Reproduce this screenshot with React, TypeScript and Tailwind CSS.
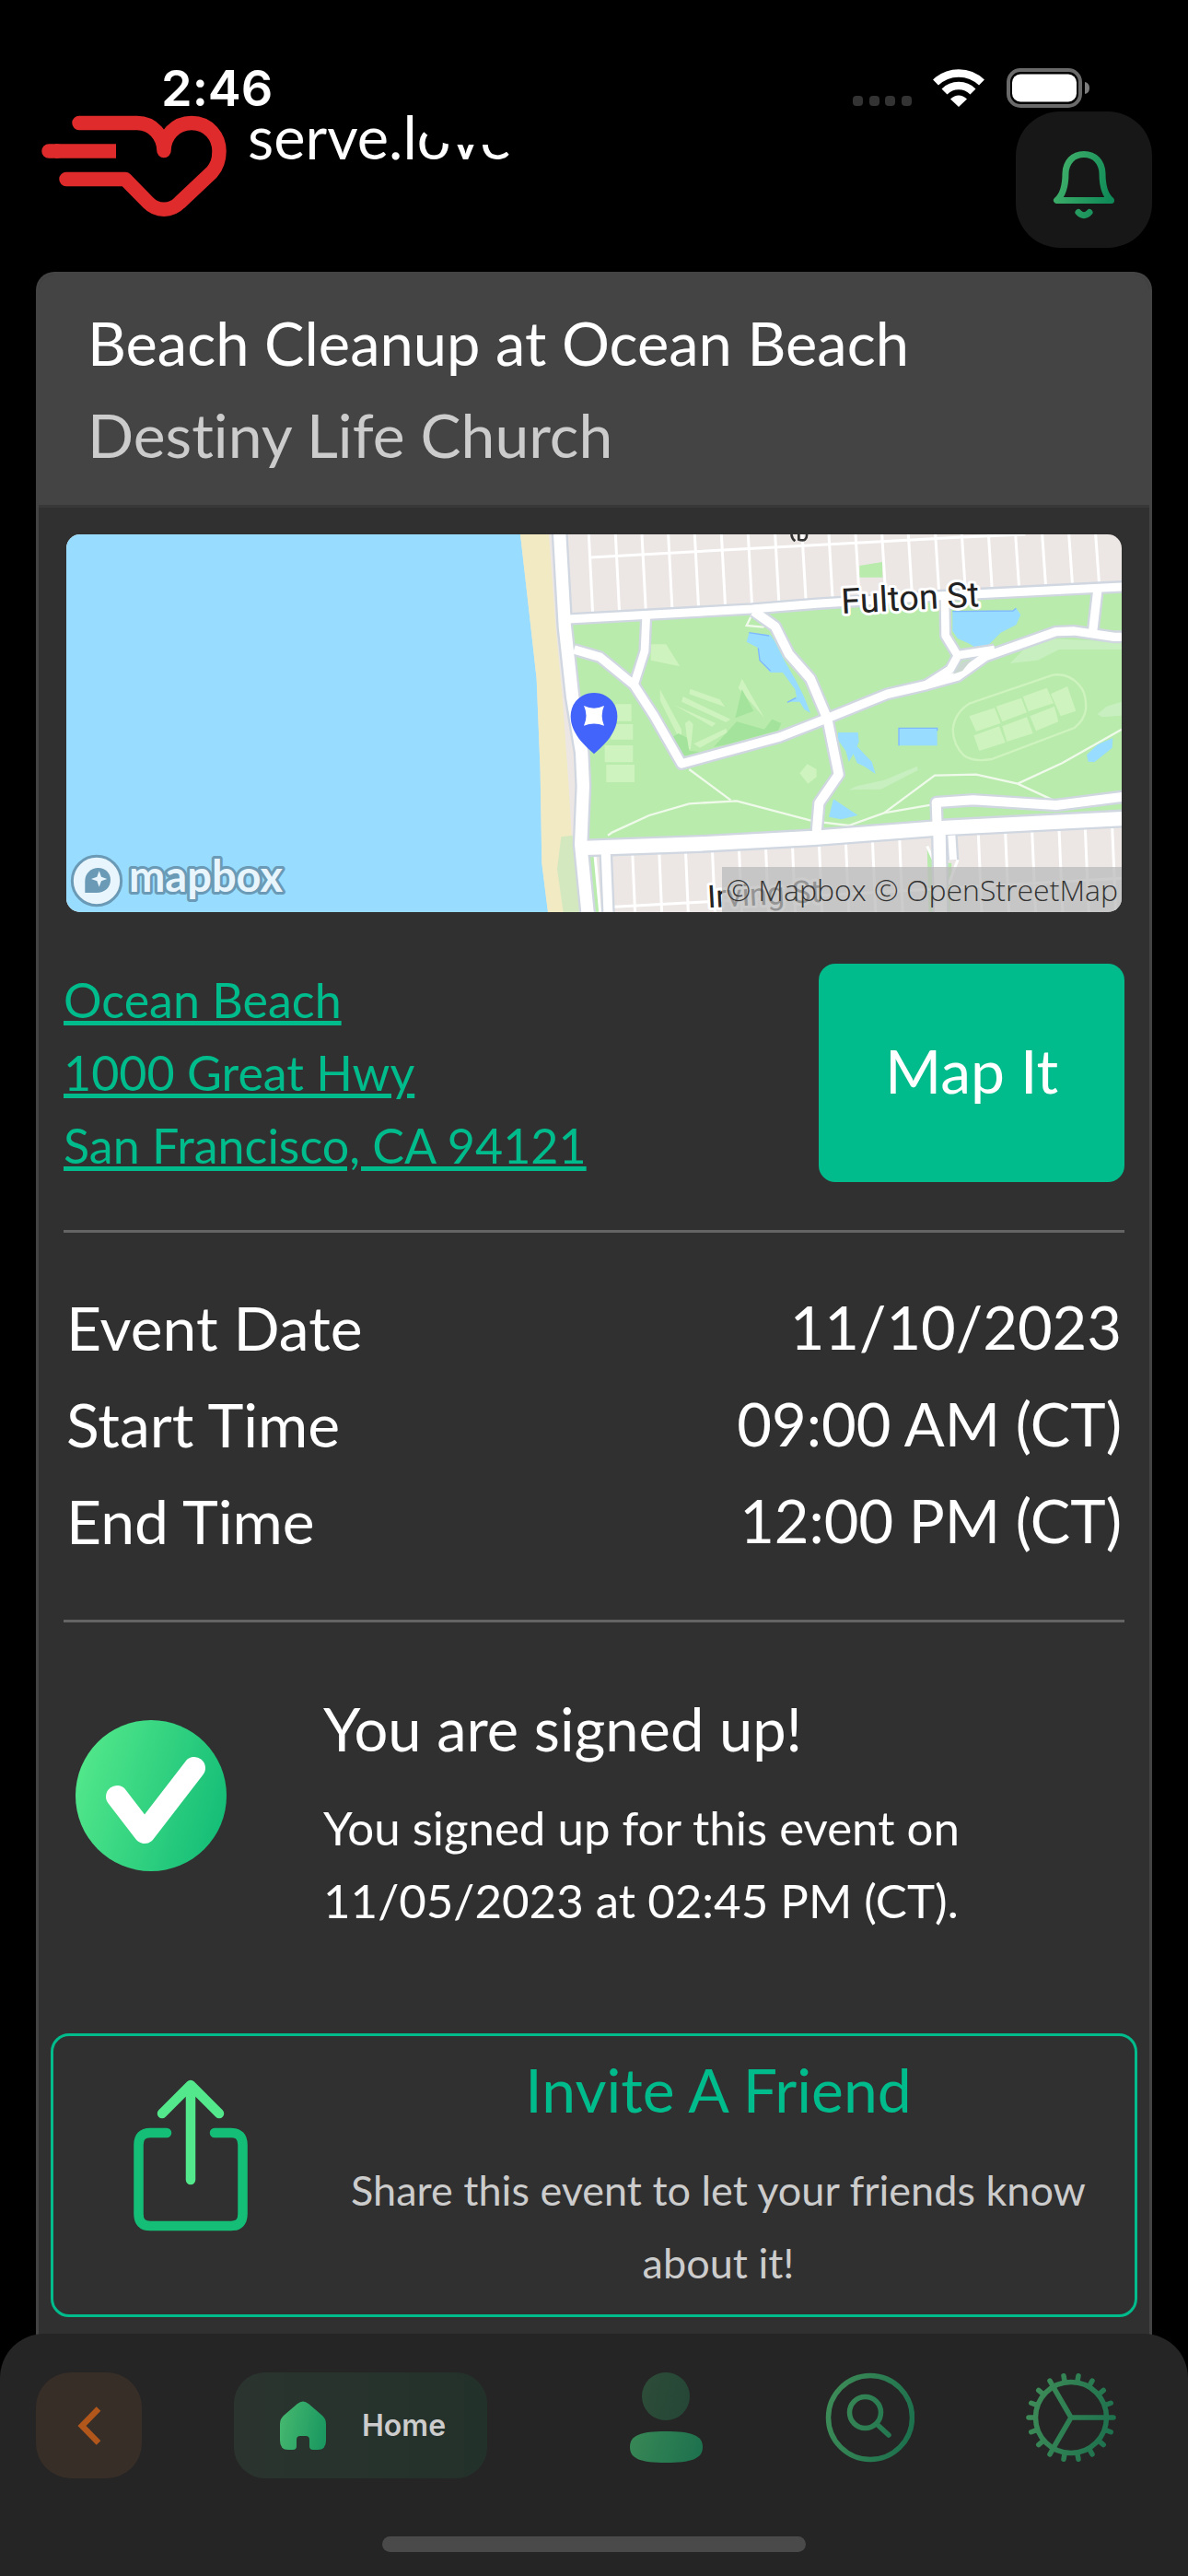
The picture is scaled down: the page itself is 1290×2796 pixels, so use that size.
import type { ReactNode } from 'react'

const address = ['Ocean Beach', '1000 Great Hwy', 'San Francisco, CA 94121']

const schedule = [
  { label: 'Event Date', value: '11/10/2023' },
  { label: 'Start Time', value: '09:00 AM (CT)' },
  { label: 'End Time', value: '12:00 PM (CT)' },
]

function StatusBar() {
  return (
    <div className="flex h-[121px] items-start justify-between pr-[107px] pl-[175px] pt-[63px]">
      <span className="font-['Inter',sans-serif] text-[54px] leading-[66px] font-semibold">2:46</span>
      <div className="flex items-center pt-[10px]">
        <svg width="64" height="44" viewBox="0 0 64 44" fill="#333" aria-hidden="true">
          {[0, 18, 35, 53].map((x) => (
            <rect key={x} x={x} y="31" width="11" height="11" rx="4" />
          ))}
        </svg>
        <svg className="ml-[23px]" width="56" height="44" viewBox="0 0 56 44" fill="none" stroke="#fff" aria-hidden="true">
          <path d="M3 16.500A36 36 0 0 1 53 16.500" strokeWidth="8.500" />
          <path d="M12.500 26.500A22 22 0 0 1 43.500 26.500" strokeWidth="8.500" />
          <path d="M19 34.500Q28 26.500 37 34.500L28 43Z" fill="#fff" stroke="none" />
        </svg>
        <svg className="ml-[24px]" width="90" height="44" viewBox="0 0 90 44" aria-hidden="true">
          <rect x="2" y="3" width="78" height="39" rx="13" fill="none" stroke="#6a6a6a" strokeWidth="4" />
          <rect x="6" y="7.500" width="70" height="30" rx="9" fill="#fff" />
          <path d="M85 16Q90 17 90 22.500Q90 28 85 29Z" fill="#7d7d7d" />
        </svg>
      </div>
    </div>
  )
}

function Logo() {
  return (
    <a href="#home" className="flex items-start">
      <svg width="212" height="120" viewBox="37 121 212 120" fill="none" stroke="#df2b2b" strokeWidth="15.500" aria-hidden="true">
        <path d="M86 133.500H149C166 133.500 178 148 178 163.500C178 148 190 133.500 208 133.500C227 133.500 238 149 238 164C238 174 236 180 230 187L195 220C186 229.500 170 229.500 161 220L136 194.500H72" strokeLinejoin="round" strokeLinecap="round" />
        <path d="M53 164H62" strokeLinecap="round" />
        <path d="M60 164H126" />
      </svg>
      <span className="ml-5 text-[65px] leading-[54px]">serve.love</span>
    </a>
  )
}

function BellIcon() {
  return (
    <svg width="74" height="80" viewBox="0 0 74 80" fill="none" stroke="url(#bell)" strokeWidth="7" strokeLinecap="round" strokeLinejoin="round" aria-hidden="true">
      <defs>
        <linearGradient id="bell" gradientUnits="userSpaceOnUse" x1="4" y1="20" x2="70" y2="40">
          <stop stopColor="#44b26b" />
          <stop offset="1" stopColor="#0f8a58" />
        </linearGradient>
      </defs>
      <path d="M37 6.500C25 6.500 17.500 15 17 27C17 39 15 50 7.500 56.500H66.500C59 50 57 39 57 27C56.500 15 49 6.500 37 6.500Z" />
      <path d="M31 69.500Q37 76 43 69.500" />
    </svg>
  )
}

const topStreets = [298, 385, 471, 557, 643, 730, 817, 905, 993, 1080, 1167, 1253, 1339, 1427, 1513, 1600, 1688, 1775, 1862, 1949]
const bottomStreets = [440, 527, 613, 700, 787, 874, 961, 1048, 1135, 1222, 1310, 1567, 1655, 1742, 1830, 1915, 2003]

const roads = [
  { d: 'M230 306L830 273L1040 256L1445 230L2050 200', width: 27 },
  { d: 'M485 300L480 410L445 520', width: 26 },
  { d: 'M250 405L335 430L445 520L510 620L600 777L920 690L1060 635L1270 550L1400 520L1500 492L1590 428L1820 347L1880 345L2010 364H2050', width: 28 },
  { d: 'M835 280L905 330L950 420L1020 500L1075 630L1112 812L1048 905L1040 1000', width: 30 },
  { d: 'M1458 240L1460 360L1500 425L1475 470L1400 518M1490 425L1620 405', width: 26 },
  { d: 'M1955 215L1940 345', width: 28 },
  { d: 'M1433 985L1430 903L1550 895L1820 912L2050 883', width: 30 },
  { d: 'M1440 1000L1445 1280', width: 40 },
  { d: 'M1480 1010L1485 1090', width: 24 },
  { d: 'M353 1060L362 1280', width: 30 },
  { d: 'M265 1052L660 1038L1030 1018L1460 985L2050 955', width: 46 },
  { d: 'M202 10L220 330L245 560L275 740L280 850L272 1040L296 1280', width: 40 },
]

function ParkMap() {
  return (
    <svg className="block h-auto w-full" viewBox="-1404 30 3438 1230" role="img" aria-label="Map of Ocean Beach">
      <rect x="-1404" y="30" width="3438" height="1230" fill="#ece7e5" />
      <path d="M-1404 30H75L100 250L128 500L140 800L145 1100L165 1260H-1404Z" fill="#98ddff" />
      <path d="M75 30H168L190 330L212 560L232 840L245 1060L272 1260H165L145 1100L140 800L128 500L100 250Z" fill="#f1eac3" />
      <path d="M208 1015L245 1010L275 1260H215L195 1120Z" fill="#d4e8bf" />
      <path d="M240 306L1040 262L2034 205V940L1030 1010L290 1040Z" fill="#b8ebac" />
      <path d="M300 1075H318L335 1260H318ZM1400 1040L1425 1090V1260H1405ZM1462 1100H1480L1475 1260H1462Z" fill="#b8ebac" />
      <path d="M1180 132L1255 120V170H1180Z" fill="#b8ebac" />

      {/* meadows and playing fields */}
      <g fill="#cff3be">
        <path d="M385 583H437V638H385ZM370 648H442V698H370ZM350 717H442V772H350ZM355 780H447V837H355Z" />
        <path d="M500 388H550L595 460L500 440Z" />
        <path d="M530 535L600 665V690L585 680L530 570ZM628 533L725 568L742 592L625 550ZM605 558L760 632L745 642L600 575ZM575 585L712 645L700 656ZM612 645L625 635L638 648L630 730H622ZM640 712L745 662L750 675L660 725ZM797 500L870 628L785 530Z" />
        <path d="M985 808L1010 778L1040 795V820L1012 842Z" />
        <path d="M1537 622L1620 595L1640 645L1560 672ZM1625 590L1707 563L1725 610L1645 640ZM1712 558L1790 530L1812 580L1730 607ZM1803 550L1857 525L1885 605L1835 622ZM1552 685L1635 655L1655 708L1570 735ZM1645 655L1725 625L1745 678L1660 705ZM1735 622L1815 590L1828 640L1755 670Z" />
      </g>
      <path d="M1540 580L1810 488Q1860 480 1895 520Q1920 545 1917 600Q1912 635 1880 660L1610 762Q1550 772 1520 750Q1485 715 1484 665Q1490 610 1540 580Z" fill="none" stroke="#cff3be" strokeWidth="7" />
      <path d="M1670 450L1720 400L1810 370L2034 380V405L1830 405L1760 440ZM1955 615L1985 590L2034 575V620L1970 625ZM1145 862L1170 850L1260 830L1368 785L1370 798L1250 860Z" fill="#c8efbf" />
      <path d="M797 535L835 605L775 628ZM705 722L780 640L870 665L895 632L925 645L915 668L745 715ZM570 690L590 678L618 692L625 735L660 738L600 755Z" fill="#a3e39c" />

      {/* lakes */}
      <g fill="#98ddff">
        <path d="M820 350L890 358L905 380L935 440L975 510L1000 560L1020 612L1000 600L985 575L945 575L975 560L970 535L930 480L890 480L855 440L850 400L812 380Z" />
        <path d="M1483 280L1680 278L1690 270L1705 292L1690 325L1640 350L1600 390L1560 400L1535 385L1500 370L1483 345Z" />
        <path d="M1308 660H1433V718H1308Z" />
        <path d="M1110 675L1175 675L1178 705L1172 720L1200 750L1220 770L1232 810L1195 785L1172 775L1160 745L1145 770L1135 735L1110 700Z" />
        <path d="M1095 892L1175 945L1120 958L1080 950Z" />
        <path d="M1920 748L1955 715L2005 693L2003 725L1945 772L1925 770Z" />
      </g>
      <path d="M1483 281L1680 279L1690 271M1308 718V661H1433V670M820 350L885 360M850 400L855 440L890 475M945 577L973 562" fill="none" stroke="#7fb8ff" strokeWidth="4" />

      {/* side streets and footpaths */}
      <g fill="none" stroke="#fff" strokeWidth="9">
        {topStreets.map((x) => (
          <path key={x} d={`M${x} 30l13 ${262 - (x - 298) / 20}`} />
        ))}
        {bottomStreets.map((x) => (
          <path key={x} d={`M${x} ${1060 - (x - 440) / 20}l12 280`} />
        ))}
        <path d="M305 105L1030 65L1500 40L1720 30M340 1245L690 1226L2034 1150M318 1075L335 1260M1400 1045L1425 1100M1500 1090L1470 1170" />
      </g>
      <g fill="none" stroke="#f0faeb" strokeWidth="7">
        <path d="M360 1010L375 1000L495 945L625 907L780 898L1030 964L1145 978L1260 937L1430 908" />
        <path d="M625 795L760 895M1260 937L1425 815L1560 812L1695 842L1825 902M1695 842L1840 775L2034 665" />
        <path d="M830 290L812 327L865 332L890 318" />
      </g>

      <g fill="none" stroke="#d0d7e0" strokeLinejoin="round">
        {roads.map((r) => (
          <path key={r.d} d={r.d} strokeWidth={r.width + 14} />
        ))}
      </g>
      <g fill="none" stroke="#fff" strokeLinejoin="round">
        {roads.map((r) => (
          <path key={r.d} d={r.d} strokeWidth={r.width} />
        ))}
      </g>
      <path d="M1485 485L1515 445L1545 438L1515 475Z" fill="#cbd8d2" />

      <g fill="none" stroke="#333" strokeWidth="8">
        <path d="M958 30Q960 44 970 52M982 30V50M982 47Q1010 55 1008 30" />
      </g>
      <g fill="#222" stroke="#fff" strokeWidth="18" strokeLinejoin="round" style={{ paintOrder: 'stroke' }}>
        <text x="1122" y="288" transform="rotate(-3 1122 288)" fontFamily="Roboto, sans-serif" fontSize="114">Fulton St</text>
        <text x="686" y="1246" transform="rotate(-3 686 1246)" fontFamily="Roboto, sans-serif" fontSize="102">Irving St</text>
      </g>

      {/* event pin */}
      <path d="M315 546C273 546 239 578 239 622C239 675 280 715 315 745C350 715 391 675 391 622C391 578 357 546 315 546Z" fill="#4264fb" />
      <path d="M282 588Q315 604 348 588Q334 620 348 653Q315 640 282 653Q297 620 282 588Z" fill="#fff" />

      {/* mapbox wordmark */}
      <circle cx="-1305" cy="1158" r="80" fill="#e9f5fc" stroke="#6a9ab5" strokeWidth="9" />
      <path d="M-1343 1197V1157C-1343 1134 -1323 1116 -1300 1116C-1277 1116 -1260 1133 -1260 1155C-1260 1181 -1280 1197 -1305 1197Z" fill="#6a9ab5" />
      <path d="M-1297 1126L-1290 1145L-1271 1152L-1290 1159L-1297 1178L-1304 1159L-1323 1152L-1304 1145Z" fill="#e9f5fc" />
      <text x="-1200" y="1193" fontFamily="Lato, sans-serif" fontWeight="700" fontSize="141" fill="#e9f5fc" stroke="#6a9ab5" strokeWidth="18" strokeLinejoin="round" style={{ paintOrder: 'stroke' }}>mapbox</text>
    </svg>
  )
}

function CheckIcon() {
  return (
    <svg width="164" height="164" viewBox="0 0 164 164" aria-hidden="true">
      <defs>
        <linearGradient id="check" x1="0" y1="0.3" x2="1" y2="0.6">
          <stop stopColor="#53e88b" />
          <stop offset="1" stopColor="#15be77" />
        </linearGradient>
      </defs>
      <circle cx="82" cy="82" r="82" fill="url(#check)" />
      <path d="M45 83L75 122L129 52" fill="none" stroke="#fff" strokeWidth="24" strokeLinecap="round" strokeLinejoin="round" />
    </svg>
  )
}

function ShareIcon() {
  return (
    <svg width="124" height="168" viewBox="0 0 124 168" fill="none" strokeWidth="10.500" strokeLinecap="round" strokeLinejoin="round" aria-hidden="true">
      <path d="M36 59H18Q5.500 59 5.500 72V147Q5.500 160 18 160H106Q118.500 160 118.500 147V72Q118.500 59 106 59H88" stroke="#15be77" />
      <path d="M62 9V110M31 38L62 7L93 38" stroke="#53e88b" />
    </svg>
  )
}

function NavButton({ label, children }: { label: string; children: ReactNode }) {
  return (
    <button type="button" aria-label={label} className="flex h-[98px] w-[100px] items-center justify-center">
      {children}
    </button>
  )
}

const gearTeeth = Array.from({ length: 18 }, (_, i) => i * 20)

function BottomNav() {
  return (
    <nav className="relative -mt-12 h-[263px] rounded-t-[48px] bg-[#252525] pt-[42px] pr-[77px] pl-[39px] font-['Inter',sans-serif]">
      <svg className="absolute size-0" aria-hidden="true">
        <defs>
          <linearGradient id="nav" gradientUnits="userSpaceOnUse" x1="0" y1="30" x2="100" y2="60">
            <stop stopColor="#3f8d58" />
            <stop offset="1" stopColor="#1c704d" />
          </linearGradient>
          <linearGradient id="house" x1="0" y1="0.4" x2="1" y2="0.6">
            <stop stopColor="#45b76f" />
            <stop offset="1" stopColor="#1a9860" />
          </linearGradient>
        </defs>
      </svg>
      <div className="flex items-start">
        <button type="button" aria-label="Back" className="flex size-[115px] items-center justify-center rounded-[38px] bg-[#382e28]">
          <svg width="28" height="44" viewBox="0 0 28 44" fill="none" stroke="#b2571b" strokeWidth="6.500" aria-hidden="true">
            <path d="M24 3.500L6 22L24 40.500" />
          </svg>
        </button>
        <button type="button" className="ml-[100px] flex h-[115px] w-[275px] items-center rounded-[34px] bg-linear-to-r from-[#2b342f] to-[#23312b] pl-[49px] text-[32px] font-semibold text-[#ccc]">
          <svg width="52" height="56" viewBox="0 0 52 56" aria-hidden="true">
            <path d="M20 4Q26 -1 32 4L46 16Q51 20 51 26V44Q51 54 42 54H37Q33 54 33 50V43Q33 39 29 39H23Q19 39 19 43V50Q19 54 15 54H10Q1 54 1 44V26Q1 20 6 16Z" fill="url(#house)" />
          </svg>
          <span className="ml-[38px]">Home</span>
        </button>
        <div className="ml-[144px] flex flex-1 justify-between">
          <NavButton label="Profile">
            <svg width="100" height="98" viewBox="0 0 100 98" fill="url(#nav)" aria-hidden="true">
              <circle cx="50" cy="26" r="26" opacity="0.4" />
              <path d="M50 64C77 64 90 68 90 81C90 94 77 98 50 98C23 98 11 94 11 81C11 68 23 64 50 64Z" />
            </svg>
          </NavButton>
          <NavButton label="Search">
            <svg width="100" height="98" viewBox="0 0 100 98" fill="none" stroke="url(#nav)" strokeWidth="5.500" strokeLinecap="round" aria-hidden="true">
              <circle cx="52" cy="49" r="45.500" />
              <circle cx="46.500" cy="43.500" r="17" />
              <path d="M60 57L72 68" />
            </svg>
          </NavButton>
          <NavButton label="Settings">
            <svg width="100" height="98" viewBox="0 0 100 98" fill="none" stroke="url(#nav)" strokeWidth="5.500" strokeLinecap="round" aria-hidden="true">
              <circle cx="50" cy="49" r="38.500" />
              {gearTeeth.map((deg) => {
                const a = (deg * Math.PI) / 180
                return <path key={deg} d={`M${50 + 40 * Math.cos(a)} ${49 + 40 * Math.sin(a)}L${50 + 46 * Math.cos(a)} ${49 + 46 * Math.sin(a)}`} />
              })}
              <path d="M50 49L88.500 49.010M50 49L30.500 15.500M50 49L30.500 82.500" />
            </svg>
          </NavButton>
        </div>
      </div>
      <div className="absolute inset-x-0 bottom-[26px] mx-auto h-[17px] w-[460px] rounded-full bg-[#4a4a4a]" />
    </nav>
  )
}

export default function App() {
  return (
    <div className="relative flex min-h-screen flex-col bg-black font-['Lato',sans-serif] text-white [font-variant-ligatures:none]">
      <StatusBar />
      <header className="flex items-start justify-between pr-[39px] pl-[37px]">
        <Logo />
        <button type="button" aria-label="Notifications" className="flex size-[148px] items-center justify-center rounded-[48px] bg-[#171717] pt-3">
          <BellIcon />
        </button>
      </header>
      {/* camera cutout */}
      <div className="absolute inset-x-0 top-[33px] mx-auto h-[124px] w-[398px] rounded-[48px] bg-black" />

      <main className="mx-[39px] mt-[26px] flex flex-1 flex-col rounded-t-[20px] border-3 border-b-0 border-[#444] bg-[#303030]">
        <div className="rounded-t-[17px] border-b-3 border-[#383838] bg-[#444] px-[53px] pt-[25px] pb-[27px] leading-[99px]">
          <h1 className="text-[65px]">Beach Cleanup at Ocean Beach</h1>
          <p className="text-[66px] text-[#ccc]">Destiny Life Church</p>
        </div>

        <div className="flex flex-1 flex-col px-[27px] pt-[29px]">
          <div className="relative mx-[3px] overflow-hidden rounded-[15px]">
            <ParkMap />
            <div className="absolute right-0 bottom-0 bg-[#bbbbbb]/75 px-1 font-['Open_Sans',sans-serif] text-[32px] leading-[49px] font-light text-[#333]">
              © Mapbox © OpenStreetMap
            </div>
          </div>

          <div className="mt-[56px] flex justify-between border-b-3 border-[#646464] pb-[52px]">
            <a href="#map" className="text-[52px] leading-[79px] text-[#00bc8c] underline">
              {address.map((line) => (
                <span key={line} className="block">{line}</span>
              ))}
            </a>
            <button type="button" className="w-[332px] rounded-[18px] bg-[#00bc8c] pb-1.5 text-[66px]">Map It</button>
          </div>

          <div className="border-b-3 border-[#646464] pt-[50px] pb-[55px]">
            <table className="w-full leading-[99px]">
              <tbody>
                {schedule.map((row) => (
                  <tr key={row.label}>
                    <th scope="row" className="p-[3px] text-left text-[66px] font-normal">{row.label}</th>
                    <td className="p-[3px] text-right text-[65px]">{row.value}</td>
                  </tr>
                ))}
              </tbody>
            </table>
          </div>

          <section className="flex items-center gap-[105px] px-[13px] pt-[66px] pb-[105px]">
            <div className="-mt-8 shrink-0">
              <CheckIcon />
            </div>
            <div>
              <h2 className="text-[65px] leading-[99px]">You are signed up!</h2>
              <p className="mt-[18px] max-w-[740px] text-[51px] leading-[79px]">You signed up for this event on 11/05/2023 at 02:45 PM (CT).</p>
            </div>
          </section>

          <button type="button" className="-mx-[14px] flex items-start rounded-[20px] border-3 border-[#00bc8c] px-[42px] pt-2 pb-4">
            <span className="flex w-[213px] justify-center pt-[38px]">
              <ShareIcon />
            </span>
            <span className="flex flex-1 flex-col items-center pl-[57px]">
              <span className="text-[66px] leading-[99px] text-[#00bc8c]">Invite A Friend</span>
              <span className="mt-[21px] max-w-[840px] text-[45px] leading-[79px] text-[#ccc]">Share this event to let your friends know about it!</span>
            </span>
          </button>
          <div className="h-[65px]" />
        </div>
      </main>

      <BottomNav />
    </div>
  )
}
